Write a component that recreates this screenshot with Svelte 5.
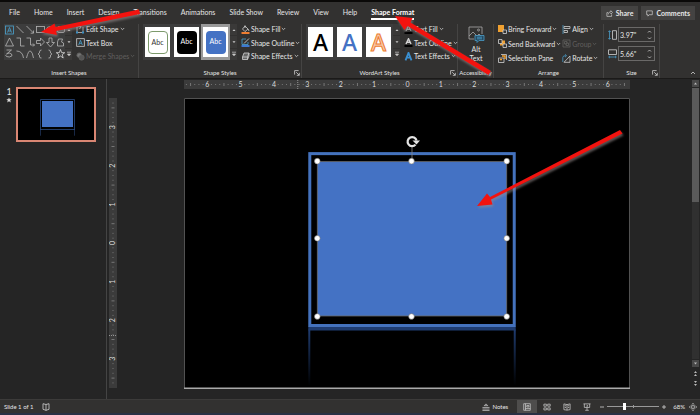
<script lang="ts">
  const tabs = ['File', 'Home', 'Insert', 'Design', 'Transitions', 'Animations', 'Slide Show', 'Review', 'View', 'Help', 'Shape Format'];
  let activeTab = $state('Shape Format');
  let shapeStyle = $state(2);
  let zoom = $state(68);
  let height = $state('3.97"');
  let width = $state('5.66"');

  const handles = [
    [133, 63], [227, 63], [322, 63],
    [133, 140], [322, 140],
    [133, 218], [227, 218], [322, 218],
  ];

  // eight ticks to the inch, numbered outwards from zero
  const makeTicks = (center: number, step: number, inches: number, end: number) => {
    const ticks = [];
    for (let i = -inches * 8; i <= inches * 8; i++) {
      const pos = center + (i * step) / 8;
      if (pos < 2 || pos > end - 2) continue;
      ticks.push({ pos, label: i % 8 === 0 ? String(Math.abs(i / 8)) : '', half: i % 4 === 0 });
    }
    return ticks;
  };
  const across = makeTicks(223, 33.3, 7, 445);
  const down = makeTicks(145, 38.6, 4, 290);
</script>

{#snippet caret()}
  <svg class="caret" viewBox="0 0 5 4"><path d="M.8 1l1.700 1.700L4.200 1" /></svg>
{/snippet}

{#snippet scroller(name: string)}
  <div class="scroller">
    <button aria-label="{name} up"><svg viewBox="0 0 6 6"><path d="M1.500 4L3 2.200 4.500 4z" fill="#ccc" /></svg></button>
    <button aria-label="{name} down"><svg viewBox="0 0 6 6"><path d="M1.500 2.200L3 4l1.500-1.800z" fill="#ccc" /></svg></button>
    <button aria-label="{name} more"><svg viewBox="0 0 6 6"><path d="M1 1.200h4M1.500 3L3 4.800 4.500 3z" fill="#ccc" stroke="#ccc" stroke-width=".7" /></svg></button>
  </div>
{/snippet}

{#snippet launcher(name: string)}
  <button class="launcher" aria-label={name}>
    <svg viewBox="0 0 6 6"><path d="M.6 4.600v-4h4M2.200 2.200l3 3M5.300 2.800v2.500H2.800" /></svg>
  </button>
{/snippet}

<div class="app">
  <header>
    <nav>
      {#each tabs as tab}
        <button class="tab" class:active={tab === activeTab} onclick={() => (activeTab = tab)}>{tab}</button>
      {/each}
    </nav>
    <div class="actions">
      <button>
        <svg viewBox="0 0 8 8"><path d="M2.500 3H1v4.300h5.400V5M2.600 5c.2-2 1.400-3 3-3V.8L7.400 2.800 5.600 4.600V3.400" /></svg>
        Share
      </button>
      <button>
        <svg viewBox="0 0 8 8"><path d="M.8 1h6.400v4.400H3.600L2.200 7V5.400H.8z" /></svg>
        Comments
      </button>
    </div>
  </header>

  <section class="ribbon">
    <div class="group">
      <div class="body shapes">
        <div class="gallery">
          <svg class="shape-grid" viewBox="0 0 60 36" role="img" aria-label="Shapes">
            <rect x="1" y="2" width="8" height="8" stroke="#4aa3d0" />
            <path d="M3 8.500L5 3.500l2 5M3.700 7h2.600" stroke="#4aa3d0" />
            <path d="M12 2l7 7M22 2l7 7M29 6.500V9.200h-2.800" />
            <rect x="32" y="2.500" width="8" height="6" />
            <ellipse cx="46" cy="5.500" rx="4" ry="3" />
            <rect x="53" y="2.500" width="7" height="6" rx="1.500" />
            <path d="M5 14L1 22h8zM12 14h4v8h4M22 14h4v7h4M28.500 19.500l1.500 1.500-1.500 1.500" />
            <path d="M32 16.500h4V14l4 4-4 4v-2.500h-4zM44.500 14h3v4.500H50L46 23l-4-4.500h2.500z" />
            <path d="M54 15h4l-1 3 2 1v3h-6v-4z" />
            <path d="M2 26h5l-5 4q3-2 5 0t-2 3q-4 0-4-2M12 27q6 0 7 7M22 34q2-8 4-7t3 7" />
            <path d="M37 26q-2 0-2 2v1l-1.500 1 1.500 1v2q0 1 2 1M44 26q2 0 2 2v1l1.500 1-1.500 1v2q0 1-2 1" />
            <path d="M56 25.500l1.200 3.200h3l-2.500 2 1 3.300-2.700-2-2.700 2 1-3.300-2.500-2h3z" stroke="#ddd" />
          </svg>
          {@render scroller('Shapes')}
        </div>
        <div class="commands">
          <button>
            <svg viewBox="0 0 9 9"><path d="M1 1.500h4M1 1.500v6h6V5M5 1.500L3.500 4M7 2v3" stroke="#bbb" /><path d="M0 .5h2v2H0zM0 6.500h2v2H0zM6 6.500h2v2H6z" fill="#3a8fc4" stroke="none" /></svg>
            Edit Shape{@render caret()}
          </button>
          <button>
            <svg viewBox="0 0 9 9"><rect x=".7" y=".7" width="7.600" height="7.600" /><path d="M2.700 7L4.500 2.300 6.300 7M3.300 5.300h2.400" stroke="#4aa3d0" /></svg>
            Text Box
          </button>
          <button disabled>
            <svg viewBox="0 0 9 9"><circle cx="3.200" cy="3.200" r="2.300" fill="#777" /><circle cx="5.600" cy="5.600" r="2.600" fill="#555" /></svg>
            Merge Shapes{@render caret()}
          </button>
        </div>
      </div>
      <footer>Insert Shapes</footer>
    </div>

    <div class="group">
      <div class="body styles">
        <div class="gallery">
          {#each ['outline', 'dark', 'blue'] as style, i}
            <button class="swatch" class:selected={i === shapeStyle} onclick={() => (shapeStyle = i)}>
              <span class={style}>Abc</span>
            </button>
          {/each}
          {@render scroller('Shape styles')}
        </div>
        <div class="commands">
          <button>
            <svg viewBox="0 0 9 9"><path d="M4 1l3 3-3 2.600L1.500 4zM4 3V.3M7.200 4l.8 2" /><path d="M.5 8h8" stroke="#ed7d31" stroke-width="2" /></svg>
            Shape Fill{@render caret()}
          </button>
          <button>
            <svg viewBox="0 0 9 9"><path d="M5 1H1v5.500h6V4" stroke="#4aa3d0" /><path d="M3 5.500L8 .5" stroke="#ddd" /><path d="M.5 8h8" stroke="#3f78cf" stroke-width="2" /></svg>
            Shape Outline{@render caret()}
          </button>
          <button>
            <svg viewBox="0 0 9 9"><path d="M3 1h5L6.500 5h-5zM1.500 5v2.500h5V5M6.500 7.500L8 4V1" fill="#666" /></svg>
            Shape Effects{@render caret()}
          </button>
        </div>
      </div>
      <footer>Shape Styles</footer>
      {@render launcher('Format shape')}
    </div>

    <div class="group">
      <div class="body styles">
        <div class="gallery">
          {#each ['black', 'blue-letter', 'orange-letter'] as style}
            <button class="swatch letter {style}">A</button>
          {/each}
          {@render scroller('WordArt styles')}
        </div>
        <div class="commands">
          <button>
            <svg viewBox="0 0 9 9"><path d="M2 6L4.500.8 7 6M3 4.300h3" /><path d="M.5 8h8" stroke="#000" stroke-width="2" /></svg>
            Text Fill{@render caret()}
          </button>
          <button>
            <svg viewBox="0 0 9 9"><path d="M2 6L4.500.8 7 6M3 4.300h3" stroke-width="1.500" /><path d="M.5 8h8" stroke="#000" stroke-width="2" /></svg>
            Text Outline{@render caret()}
          </button>
          <button>
            <svg viewBox="0 0 9 9"><path d="M1.500 8.300L4.500.8l3 7.500M2.700 5.700h3.600" stroke="#3a8fd0" stroke-width="1.800" /></svg>
            Text Effects{@render caret()}
          </button>
        </div>
      </div>
      <footer>WordArt Styles</footer>
      {@render launcher('Format text effects')}
    </div>

    <div class="group">
      <div class="body">
        <button class="alt-text">
          <svg viewBox="0 0 17 17"><path d="M1 13V1h13v7M1 10l4-4 4 4 2-2 2 2M1 13h5" stroke="#aaa" /><circle cx="10.500" cy="4" r="1" stroke="#aaa" /><path d="M7 9.500h9v5H11L9 16.500v-2H7zM9 11.200h5M9 12.800h5" stroke="#4a9cc8" fill="#264a60" /></svg>
          Alt<br />Text
        </button>
      </div>
      <footer>Accessibility</footer>
    </div>

    <div class="group">
      <div class="body arrange">
        <div class="commands">
          <button>
            <svg viewBox="0 0 9 9"><path d="M0 0h6v7H0z" fill="#f0a030" stroke="none" /><path d="M5 5h3.500v3.500H5z" fill="#333" /></svg>
            Bring Forward{@render caret()}
          </button>
          <button>
            <svg viewBox="0 0 9 9"><path d="M2 1.500h5v5H2z" fill="#f0a030" stroke="none" /><path d="M.5.5H4v4H.5zM5 5h3.500v3.500H5z" fill="#333" /></svg>
            Send Backward{@render caret()}
          </button>
          <button>
            <svg viewBox="0 0 9 9"><path d="M3 .5h5.500V6M.5 4H6v4.500H.5z" fill="#333" /><path d="M4 2h3v3M2 5.500h2" stroke="#f0a030" stroke-width="1.500" /></svg>
            Selection Pane
          </button>
        </div>
        <div class="commands">
          <button>
            <svg viewBox="0 0 9 9"><path d="M1 0v9" stroke="#4a9cc8" /><path d="M2 1.500h6v2H2zM2 5.500h3.500v2H2z" /></svg>
            Align{@render caret()}
          </button>
          <button disabled>
            <svg viewBox="0 0 9 9"><path d="M1 1h7v7H1zM2.500 2.500H5V5H2.500zM4 4h2.500v2.500H4z" /></svg>
            Group{@render caret()}
          </button>
          <button>
            <svg viewBox="0 0 9 9"><path d="M8 8.300H2L8 2z" /><path d="M.8 8V3.500q0-2 3-1.800M3 .3l1.600 1.400L3 3.200" stroke="#4a9cc8" /></svg>
            Rotate{@render caret()}
          </button>
        </div>
      </div>
      <footer>Arrange</footer>
    </div>

    <div class="group">
      <div class="body sizes">
        <label>
          <svg viewBox="0 0 9 10"><path d="M4.500.7h4v8.600h-4z" /><path d="M1.500.8v8.400M.3 2L1.500.7 2.700 2M.3 8l1.200 1.300L2.700 8" stroke="#4a9cc8" /></svg>
          <span class="field">
            <input aria-label="Height" bind:value={height} />
            <svg viewBox="0 0 5 12"><path d="M1 3.500L2.500 2 4 3.500M1 8.500L2.500 10 4 8.500" /></svg>
          </span>
        </label>
        <label>
          <svg viewBox="0 0 9 10"><path d="M.5.8h8v4.700h-8z" /><path d="M.8 8h7.400M2 6.800L.7 8 2 9.200M7 6.800L8.300 8 7 9.200" stroke="#4a9cc8" /></svg>
          <span class="field">
            <input aria-label="Width" bind:value={width} />
            <svg viewBox="0 0 5 12"><path d="M1 3.500L2.500 2 4 3.500M1 8.500L2.500 10 4 8.500" /></svg>
          </span>
        </label>
      </div>
      <footer>Size</footer>
      {@render launcher('Size and position')}
    </div>

    <button class="collapse" aria-label="Collapse ribbon"><svg viewBox="0 0 6 6"><path d="M1 4l2-2 2 2" /></svg></button>
  </section>

  <main>
    <aside>
      <div class="number">1<svg viewBox="0 0 7 7"><path d="M3.500.5l.9 2h2.200L4.900 4l.7 2.300-2.100-1.300-2.100 1.300L2.100 4 .4 2.500h2.200z" fill="#ddd" stroke="none" /></svg></div>
      <button class="thumb" aria-label="Slide 1">
        <svg viewBox="0 0 76 51">
          <path d="M22.500 10.500v30h34v-30zM22.500 40v6M56.500 40v6" stroke="#2b4a80" />
          <path d="M22.500 41v6M56.500 41v6" stroke="#15233c" />
          <rect x="24" y="12" width="31" height="26" fill="#4472c4" stroke="none" />
        </svg>
      </button>
    </aside>

    <div class="editor">
      <svg class="ruler-x" viewBox="0 0 445 9" preserveAspectRatio="none">
        {#each across as t}
          {#if t.label}
            <text x={t.pos} y="7">{t.label}</text>
          {:else}
            <path d="M{t.pos} {t.half ? 3 : 4}v{t.half ? 3 : 1}" />
          {/if}
        {/each}
        <path d="M113.500 0v9" stroke="#bbb" stroke-dasharray="1 1" />
      </svg>
      <svg class="ruler-y" viewBox="0 0 8 290" preserveAspectRatio="none">
        {#each down as t}
          {#if t.label}
            <text transform="translate(6 {t.pos}) rotate(-90)">{t.label}</text>
          {:else}
            <path d="M{t.half ? 2.5 : 3.5} {t.pos}h{t.half ? 3 : 1}" />
          {/if}
        {/each}
        <path d="M0 237.500h8" stroke="#bbb" stroke-dasharray="1 1" />
      </svg>
      <svg class="slide" viewBox="0 0 445 290" role="img" aria-label="Slide with framed rectangle">
        <defs>
          <linearGradient id="fade" x1="0" y1="0" x2="0" y2="1">
            <stop offset="0" stop-color="#1f3c70" />
            <stop offset="1" stop-color="#000" />
          </linearGradient>
        </defs>
        <rect width="445" height="290" fill="#000" stroke="none" />
        <path d="M.5 290V.5h444V290" stroke="#666" />
        <path d="M0 289.500h445" stroke="#aaa" stroke-width="1.500" />
        <path d="M124 231h2v56h-2zM329 231h2v56h-2z" fill="url(#fade)" stroke="none" />
        <path d="M124 228h207v4H124z" fill="#1f3c70" stroke="none" />
        <rect x="125.500" y="55.500" width="204" height="171.500" stroke="#4472bd" stroke-width="3" />
        <rect x="133" y="63.500" width="189" height="154" fill="#4472c4" stroke="#6a6a6a" />
        <path d="M227.500 48v14" stroke="#888" />
        {#each handles as [x, y]}
          <circle cx={x} cy={y} r="2.800" fill="#fff" stroke="#777" stroke-width=".6" />
        {/each}
        <path d="M231 46.500a4.500 4.500 0 1 1 1-4" stroke="#e4e4e4" stroke-width="2.200" />
        <path d="M228 42.500h7.500L232 46.500z" fill="#e4e4e4" stroke="none" />
      </svg>
      <div class="scrollbar">
        <button aria-label="Scroll up"><svg viewBox="0 0 7 7"><path d="M2 4.500L3.500 2.500 5 4.500z" fill="#bbb" /></svg></button>
        <div class="track"><div class="grip"></div></div>
        <button aria-label="Scroll down"><svg viewBox="0 0 7 7"><path d="M2 2.500l1.500 2 1.500-2z" fill="#bbb" /></svg></button>
        <button class="plain" aria-label="Previous slide"><svg viewBox="0 0 7 7"><path d="M2 3L3.500 1 5 3zM2 6l1.500-2L5 6z" fill="#bbb" /></svg></button>
        <button class="plain" aria-label="Next slide"><svg viewBox="0 0 7 7"><path d="M2 1l1.500 2L5 1zM2 4l1.500 2L5 4z" fill="#bbb" /></svg></button>
      </div>
    </div>
  </main>

  <div class="status">
    <span>Slide 1 of 1</span>
    <button class="spell" aria-label="Spelling"><svg viewBox="0 0 8 8"><path d="M4 1.500L1 .7v5.600l3 1 3-1V.7zM4 1.500v6" /></svg></button>
    <div class="spacer"></div>
    <button class="notes"><svg viewBox="0 0 9 9"><path d="M2.500 3L4.500 1l2 2zM.5 5h8M.5 6.800h8M.5 8.500h8" /></svg>Notes</button>
    <button class="view on" aria-label="Normal"><svg viewBox="0 0 9 9"><path d="M.8.8h7.400v7.400H.8zM2.800.8v7.400M4.300 2.800h2.400v1.700H4.300zM2.800 6.300h5.400" /></svg></button>
    <button class="view" aria-label="Slide sorter"><svg viewBox="0 0 9 9"><path d="M1 1.300h2.800v2.300H1zM5.300 1.300h2.800v2.300H5.300zM1 5.500h2.800v2.300H1zM5.300 5.500h2.800v2.300H5.300z" /></svg></button>
    <button class="view" aria-label="Reading view"><svg viewBox="0 0 9 9"><path d="M4.500 1.800L1 1v6.500l3.500.5L8 7.500V1zM4.500 1.800V8M2 3l1.500.2M2 5l1.500.2M5.500 3.200L7 3M5.500 5.200L7 5" /></svg></button>
    <button class="view" aria-label="Slide show"><svg viewBox="0 0 9 9"><path d="M.5 1h8M1.500 1v4h6V1M4.500 5v3M2.500 8.200h4M4 2.500L5.500 3.300 4 4" /></svg></button>
    <button class="step" aria-label="Zoom out"><svg viewBox="0 0 6 6"><path d="M1 3h4" /></svg></button>
    <input type="range" min="10" max="190" aria-label="Zoom" bind:value={zoom} />
    <button class="step" aria-label="Zoom in"><svg viewBox="0 0 6 6"><path d="M1 3h4M3 1v4" /></svg></button>
    <output>{zoom}%</output>
    <button class="fit" aria-label="Fit slide to window"><svg viewBox="0 0 9 9"><path d="M3 3h3v3H3zM3 1.800L4.500.4 6 1.800M3 7.200l1.500 1.400L6 7.200M1.800 3L.4 4.500 1.800 6M7.200 3l1.400 1.500L7.200 6" /></svg></button>
  </div>

  <svg class="arrows" viewBox="0 0 700 415" aria-hidden="true">
    <path d="M139 9.500L55.500 27l-1-3.500L41 32l16 3-1-4L140 14z" />
    <path d="M491 71L410.500 22.500l2-4.500L395 16l9.500 14 3-4L488.500 75z" />
    <path d="M620 130L490 197l-3-3.500L477 206l15.500-1.500-1.500-5L622.500 133.500z" />
  </svg>
</div>

<style>
  :global(body) {
    margin: 0;
    background: #252525;
  }

  .app {
    position: relative;
    display: flex;
    flex-direction: column;
    min-height: 100vh;
    box-sizing: border-box;
    border-top: 2px solid #0a0908;
    border-bottom: 2px solid #293044;
    background: #252525;
    color: #e6e6e6;
    font-family: Lato, "Open Sans", sans-serif;
    font-size: 7px;
    line-height: 10px;
  }

  button,
  input {
    font: inherit;
    color: inherit;
    background: none;
    border: 0;
    margin: 0;
    padding: 0;
  }

  svg {
    fill: none;
    stroke: #d0d0d0;
    stroke-width: 0.8;
    flex: none;
  }

  header {
    display: flex;
    justify-content: space-between;
    padding: 4px 5px 2px 9px;
    background: #323130;
  }

  nav {
    display: flex;
    align-items: center;
    gap: 14px;
  }

  .tab {
    height: 14px;
    border-bottom: 2px solid transparent;
    white-space: nowrap;
  }

  .tab.active {
    border-color: #fff;
    color: #fff;
    font-weight: bold;
  }

  .actions {
    display: flex;
    gap: 3px;
  }

  .actions button {
    display: flex;
    align-items: center;
    gap: 3px;
    height: 14px;
    padding: 0 5px;
    background: #444342;
    font-weight: bold;
  }

  .actions svg {
    width: 7px;
    height: 7px;
  }

  .ribbon {
    display: grid;
    grid-template-columns: 139fr 163fr 156fr 36fr 110fr 56fr 40fr;
    padding-top: 2px;
    background: #323130;
    border-bottom: 1px solid #1b1a19;
  }

  .group {
    position: relative;
    display: flex;
    flex-direction: column;
    gap: 4px;
    border-right: 1px solid #454443;
    min-width: 0;
  }

  .group footer {
    font-size: 6px;
    text-align: center;
    white-space: nowrap;
  }

  .body {
    display: flex;
    height: 40px;
    gap: 4px;
    padding-left: 4px;
  }

  .gallery {
    display: flex;
    height: 36px;
    background: #3d3d3d;
  }

  .shape-grid {
    width: 61px;
    height: 36px;
    stroke: #b5b5b5;
  }

  .scroller {
    display: flex;
    flex-direction: column;
    gap: 1px;
    width: 7px;
    background: #323130;
  }

  .scroller button {
    display: grid;
    place-items: center;
    flex: 1;
    background: #3a3938;
  }

  .scroller svg {
    width: 6px;
    height: 6px;
    stroke: none;
  }

  .commands {
    display: flex;
    flex-direction: column;
    justify-content: space-between;
    height: 37px;
  }

  .commands button {
    display: flex;
    align-items: center;
    gap: 1px;
    white-space: nowrap;
  }

  .commands svg {
    width: 9px;
    height: 9px;
  }

  .commands .caret {
    width: 5px;
    height: 4px;
  }

  button:disabled {
    color: #605f5e;
  }

  button:disabled svg {
    stroke: #605f5e;
  }

  .swatch {
    display: grid;
    place-items: center;
    width: 29px;
    box-sizing: border-box;
    border: 2px solid #3d3d3d;
    border-width: 3px 2px;
    background: #fff;
  }

  .swatch.selected {
    border-color: #999;
  }

  .swatch span {
    box-sizing: border-box;
    width: 20px;
    height: 23px;
    border-radius: 4px;
    line-height: 21px;
  }

  .outline {
    border: 1px solid #7d9a6c;
    color: #333;
  }

  .dark {
    background: #000;
    color: #fff;
  }

  .blue {
    background: #4472c4;
    color: #fff;
  }

  .letter {
    font-family: "Noto Sans", "Liberation Sans", sans-serif;
    font-size: 23px;
    line-height: 30px;
    font-weight: 500;
    color: #000;
  }

  .blue-letter {
    color: #4472c4;
  }

  .orange-letter {
    color: #f8cbad;
    -webkit-text-stroke: 1px #ed7d31;
  }

  .alt-text {
    display: flex;
    flex-direction: column;
    align-items: center;
    line-height: 9px;
    width: 28px;
    text-align: center;
  }

  .alt-text svg {
    width: 17px;
    height: 17px;
    margin: 2px 0;
  }

  .arrange {
    gap: 1px;
  }

  .arrange .commands {
    height: 39px;
  }

  .sizes {
    flex-direction: column;
    gap: 4px;
    box-sizing: border-box;
    padding-top: 3px;
  }

  .sizes label {
    display: flex;
    align-items: center;
    gap: 1px;
    padding-right: 4px;
  }

  .sizes label > svg {
    width: 9px;
    height: 10px;
  }

  .field {
    display: flex;
    flex: 1;
    align-items: center;
    height: 13px;
    border: 1px solid #6a6968;
    min-width: 0;
  }

  .field input {
    flex: 1;
    width: 0;
    padding-left: 1px;
    font-size: 7px;
  }

  .field svg {
    width: 5px;
    height: 12px;
    margin-right: 2px;
  }

  .launcher {
    position: absolute;
    right: 1px;
    bottom: 2px;
    width: 6px;
    height: 6px;
    display: flex;
  }

  .collapse {
    align-self: end;
    justify-self: end;
    width: 6px;
    height: 10px;
    margin-right: 4px;
  }

  main {
    display: flex;
    flex: 1;
    border-bottom: 1px solid #3c3b3a;
  }

  aside {
    display: flex;
    align-items: flex-start;
    gap: 4px;
    width: 100px;
    padding: 8px 0 0 6px;
    border-right: 1px solid #444;
  }

  .number {
    display: flex;
    flex-direction: column;
    align-items: center;
    width: 6px;
    font-size: 9px;
  }

  .number svg {
    width: 6px;
    height: 6px;
  }

  .thumb {
    display: flex;
    width: 80px;
    box-sizing: border-box;
    border: 2px solid #d98673;
    background: #000;
  }

  .thumb svg {
    width: 100%;
  }

  .editor {
    flex: 1;
    display: grid;
    grid-template-columns: 8px 67px 1fr 62px 7px;
    grid-template-rows: 9px 1fr;
    row-gap: 9px;
    padding: 1px 1px 0 2px;
  }

  .ruler-x,
  .ruler-y {
    width: 100%;
    background: #3b3b3b;
    stroke: #909090;
    stroke-width: 0.7;
  }

  .ruler-x {
    grid-column: 3;
    height: 9px;
  }

  .ruler-y {
    grid-column: 1;
    grid-row: 2;
    align-self: start;
    height: 290px;
  }

  .editor text {
    fill: #ddd;
    stroke: none;
    font-size: 7px;
    text-anchor: middle;
  }

  .slide {
    grid-column: 3;
    grid-row: 2;
    width: 100%;
  }

  .scrollbar {
    grid-column: 5;
    grid-row: 1 / 3;
    display: flex;
    flex-direction: column;
    gap: 1px;
    padding-bottom: 12px;
  }

  .scrollbar button {
    display: flex;
    height: 7px;
    background: #484848;
  }

  .scrollbar .plain {
    background: none;
    margin-top: 2px;
  }

  .scrollbar svg {
    width: 7px;
    height: 7px;
    stroke: none;
  }

  .track {
    flex: 1;
    background: #303030;
  }

  .grip {
    height: 42%;
    background: #5a5a5a;
  }

  .status {
    display: flex;
    align-items: center;
    height: 13px;
    padding: 0 3px 0 4px;
    background: #323130;
    font-size: 6px;
  }

  .status button {
    display: flex;
    align-items: center;
    justify-content: center;
    gap: 2px;
    height: 13px;
  }

  .status svg {
    width: 8px;
    height: 8px;
  }

  .spell {
    margin-left: 9px;
  }

  .spacer {
    flex: 1;
  }

  .notes {
    margin-right: 9px;
  }

  .view {
    width: 20px;
  }

  .view.on {
    background: #4e4d4c;
  }

  .status .step svg {
    width: 6px;
    height: 6px;
  }

  .step {
    margin: 0 2px;
  }

  input[type="range"] {
    appearance: none;
    width: 52px;
    height: 9px;
    background:
      linear-gradient(#999, #999) center / 1px 3px no-repeat,
      linear-gradient(#999, #999) center / 100% 1px no-repeat;
  }

  input[type="range"]::-webkit-slider-thumb {
    appearance: none;
    width: 3px;
    height: 7px;
    background: #fff;
  }

  output {
    margin: 0 4px;
  }

  .arrows {
    position: absolute;
    top: -2px;
    left: 0;
    width: 100%;
    pointer-events: none;
    filter: drop-shadow(1px 2px 1px rgba(150, 140, 140, 0.6));
  }

  .arrows path {
    fill: #f3130f;
    stroke: none;
  }
</style>
